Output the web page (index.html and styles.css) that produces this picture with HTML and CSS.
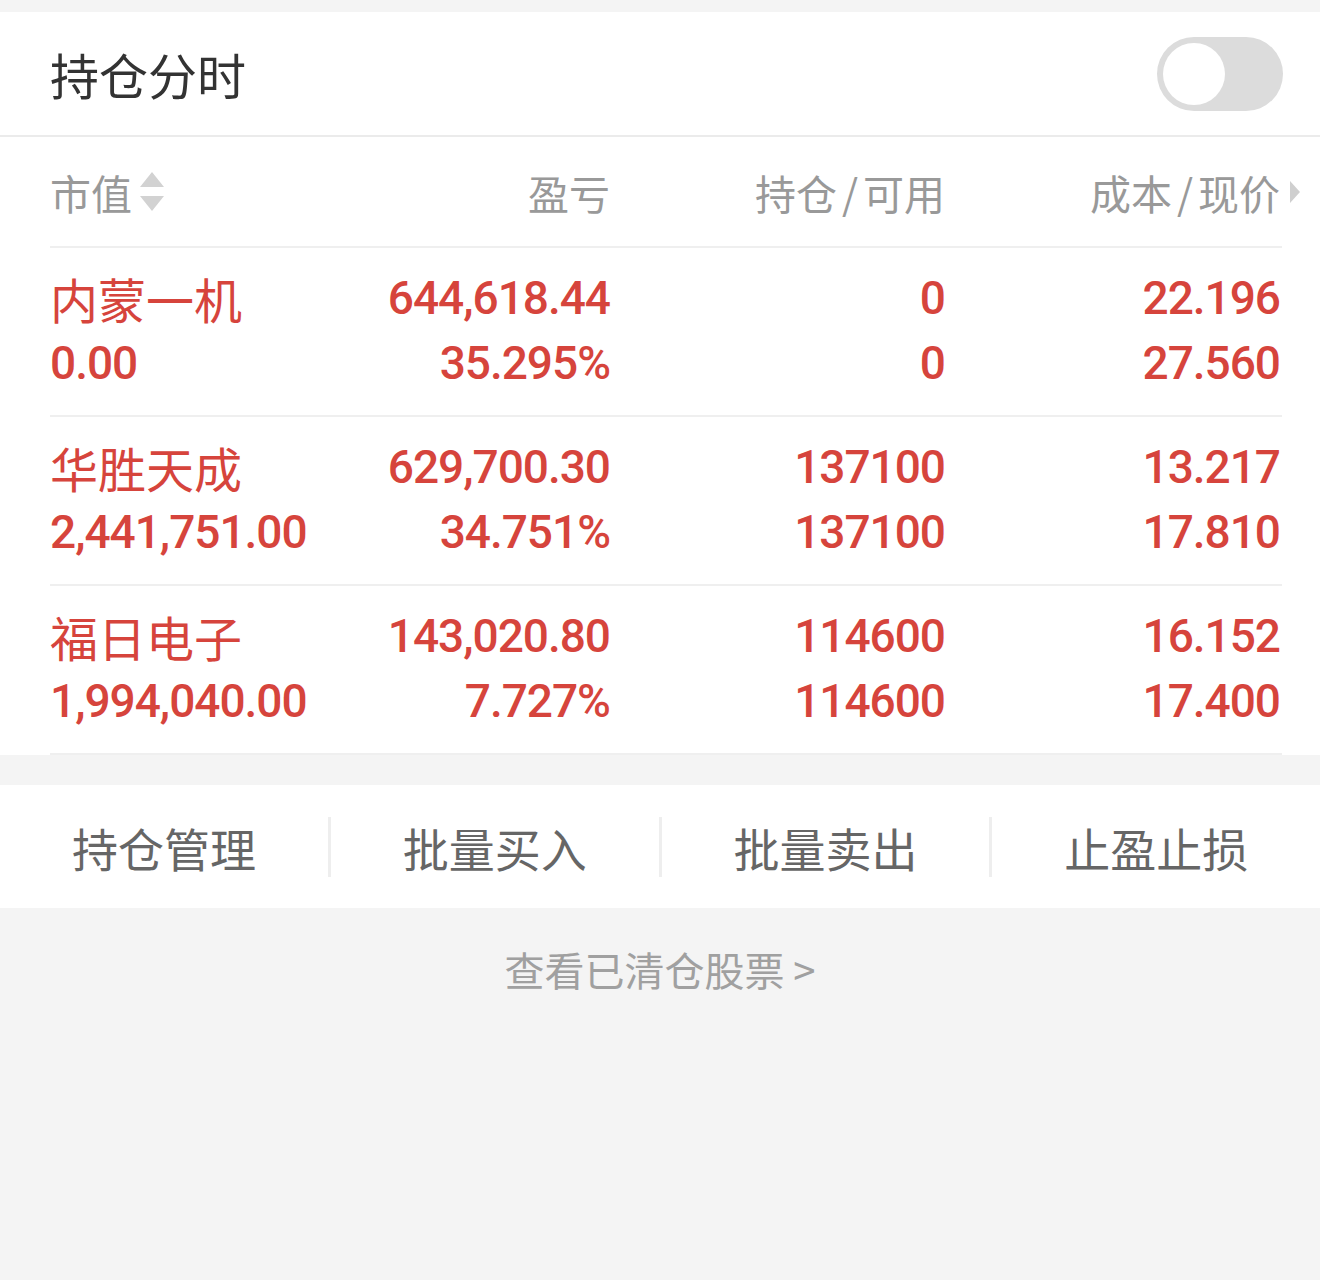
FILE: index.html
```html
<!DOCTYPE html>
<html lang="zh-CN">
<head>
    <meta charset="UTF-8">
    <meta name="viewport" content="width=device-width, initial-scale=1.0">
    <title>持仓</title>
    <link rel="stylesheet" href="styles.css">
</head>
<body>
    <div class="panel">
        <div class="panel-head">
            <span class="panel-title">持仓分时</span>
            <span class="switch"><span class="knob"></span></span>
        </div>

        <div class="holdings">
            <div class="row head-row">
                <div class="cell left">市值<span class="sort"><i class="up"></i><i class="down"></i></span></div>
                <div class="cell">盈亏</div>
                <div class="cell">持仓<span class="slash">/</span>可用</div>
                <div class="cell">成本<span class="slash">/</span>现价<span class="more"></span></div>
            </div>

            <div class="row stock">
                <div class="cell left"><span class="name">内蒙一机</span><span class="num">0.00</span></div>
                <div class="cell"><span class="num">644,618.44</span><span class="num">35.295%</span></div>
                <div class="cell"><span class="num">0</span><span class="num">0</span></div>
                <div class="cell"><span class="num">22.196</span><span class="num">27.560</span></div>
            </div>

            <div class="row stock">
                <div class="cell left"><span class="name">华胜天成</span><span class="num">2,441,751.00</span></div>
                <div class="cell"><span class="num">629,700.30</span><span class="num">34.751%</span></div>
                <div class="cell"><span class="num">137100</span><span class="num">137100</span></div>
                <div class="cell"><span class="num">13.217</span><span class="num">17.810</span></div>
            </div>

            <div class="row stock">
                <div class="cell left"><span class="name">福日电子</span><span class="num">1,994,040.00</span></div>
                <div class="cell"><span class="num">143,020.80</span><span class="num">7.727%</span></div>
                <div class="cell"><span class="num">114600</span><span class="num">114600</span></div>
                <div class="cell"><span class="num">16.152</span><span class="num">17.400</span></div>
            </div>
        </div>
    </div>

    <div class="actions">
        <a class="action">持仓管理</a>
        <a class="action">批量买入</a>
        <a class="action">批量卖出</a>
        <a class="action">止盈止损</a>
    </div>

    <div class="cleared">查看已清仓股票 &gt;</div>
</body>
</html>
```

FILE: styles.css
```css
/* base */
body {
    margin: 0;
    padding-top: 12px;
    background-color: #f4f4f4;
    font-family: "Noto Sans CJK SC", sans-serif;
}

/* top panel */
.panel {
    background-color: #fff;
}

.panel-head {
    display: flex;
    justify-content: space-between;
    align-items: center;
    height: 123px;
    padding: 0 37px 0 50px;
    border-bottom: 2px solid #ebebeb;
}

.panel-title {
    font-size: 49px;
    color: #333;
}

.switch {
    display: flex;
    align-items: center;
    width: 126px;
    height: 74px;
    padding: 0 6px;
    box-sizing: border-box;
    border-radius: 37px;
    background-color: #dcdcdc;
}

.knob {
    width: 62px;
    height: 62px;
    border-radius: 50%;
    background-color: #fff;
}

/* table */
.holdings {
    margin: 0 38px 0 50px;
}

.row {
    display: grid;
    grid-template-columns: 225px 1fr 1fr 1fr;
    padding-right: 2px;
    border-bottom: 2px solid #efefef;
}

.cell {
    display: flex;
    flex-direction: column;
    align-items: flex-end;
}

.cell.left {
    align-items: flex-start;
}

.head-row {
    height: 109px;
    align-items: center;
    font-size: 41px;
    color: #999;
}

.head-row .cell {
    flex-direction: row;
    justify-content: flex-end;
    align-items: center;
}

.head-row .cell.left {
    justify-content: flex-start;
}

.slash {
    padding: 0 5px;
}

.sort {
    display: flex;
    flex-direction: column;
    gap: 9px;
    margin-left: 8px;
}

.sort i {
    width: 0;
    height: 0;
    border-left: 12px solid transparent;
    border-right: 12px solid transparent;
}

.sort .up {
    border-bottom: 15px solid #d2d2d2;
}

.sort .down {
    border-top: 15px solid #d2d2d2;
}

.more {
    width: 0;
    height: 0;
    margin-left: 10px;
    margin-right: -20px;
    border-top: 11px solid transparent;
    border-bottom: 11px solid transparent;
    border-left: 10px solid #cfcfcf;
}

.stock {
    padding-top: 18px;
    padding-bottom: 19px;
    color: #d6443c;
}

.stock span {
    display: block;
    height: 65px;
    line-height: 65px;
}

.name {
    font-size: 48px;
}

.num {
    font-family: Roboto, sans-serif;
    font-size: 46px;
    font-weight: 500;
    letter-spacing: -1px;
}

/* action bar */
.actions {
    display: flex;
    align-items: center;
    height: 123px;
    margin-top: 30px;
    background-color: #fff;
}

.action {
    flex: 1;
    text-align: center;
    font-size: 46px;
    line-height: 60px;
    color: #666;
    border-left: 3px solid #eee;
}

.action:first-child {
    border-left: none;
}

.cleared {
    padding-top: 32px;
    text-align: center;
    font-size: 40px;
    color: #a0a0a0;
}
```
